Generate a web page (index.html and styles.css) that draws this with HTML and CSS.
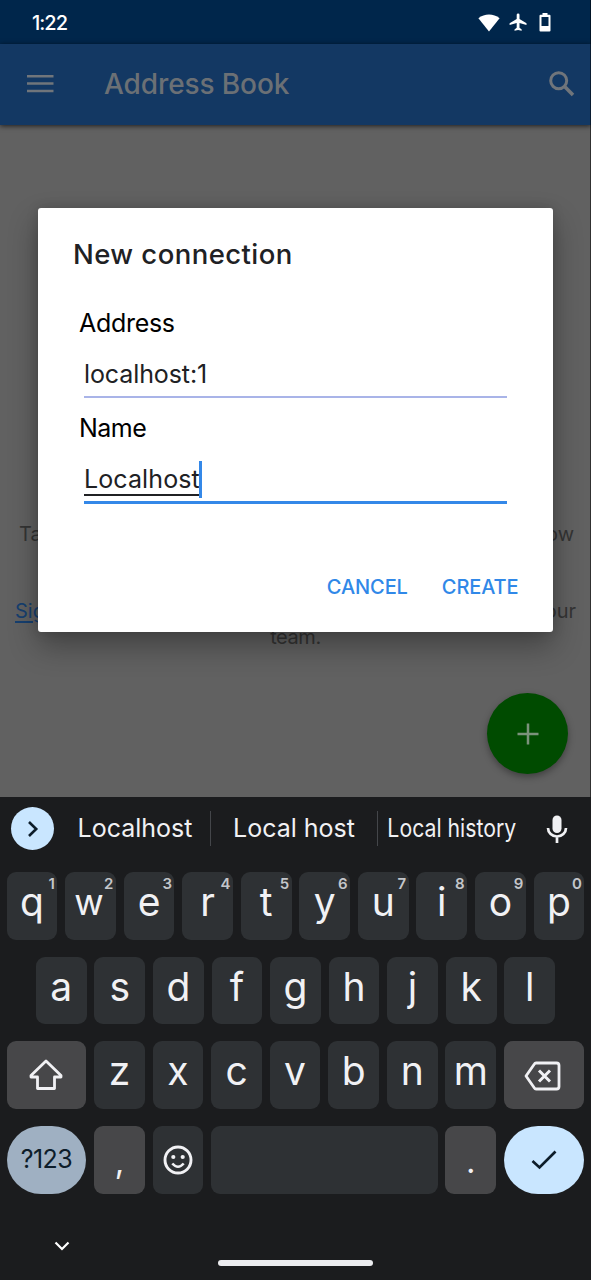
FILE: index.html
```html
<!DOCTYPE html>
<html lang="en">
<head>
<meta charset="utf-8">
<title>Address Book</title>
<link rel="stylesheet" href="styles.css">
</head>
<body>
<div class="phone">
  <main class="app">
    <div class="status">
      <span class="clock">1:22</span>
      <div class="status-icons">
        <svg width="22" height="18" viewBox="0 0 22 18"><path d="M11 17.500 .4 4.200C6.500-.6 15.500-.6 21.600 4.200Z" fill="#fff"/></svg>
        <svg width="18" height="19" viewBox="0 0 18 19"><path d="M17.500 12v-1.700L10.500 6V1.800a1.400 1.400 0 0 0-2.800 0V6L.6 10.300V12l7.100-2v4.800L5.500 16.400v1.400l3.600-.9 3.600.9v-1.400l-2.200-1.600V10Z" fill="#fff"/></svg>
        <svg width="12" height="19" viewBox="0 0 12 19"><path d="M3.500 0h5v1.800H10.500q1 0 1 1V17.500q0 1-1 1h-9q-1 0-1-1V2.800q0-1 1-1h2ZM2.500 4v9h7V4Z" fill="#fff" fill-rule="evenodd"/></svg>
      </div>
    </div>
    <header class="toolbar">
      <svg class="menu" width="27" height="20" viewBox="0 0 27 20"><path d="M0 2.200h26.500M0 9.600h26.500M0 17h26.500" stroke="#70757b" stroke-width="2.500"/></svg>
      <h1 class="toolbar-title">Address Book</h1>
      <svg width="26" height="26" viewBox="0 0 26 26"><circle cx="9.700" cy="9.700" r="8" fill="none" stroke="#70757b" stroke-width="3"/><path d="M15.600 15.600 24 24" stroke="#70757b" stroke-width="3.600"/></svg>
    </header>
    <section class="content">
      <p class="hint hint-first"><span>Ta</span><span>ow</span></p>
      <p class="hint hint-second"><a class="link">Sig</a><span>our</span></p>
      <p class="hint-last">team.</p>
    </section>
    <div class="fab"><svg width="22" height="22" viewBox="0 0 22 22"><path d="M11 .5v21M.5 11h21" stroke="#7b927b" stroke-width="2.500"/></svg></div>
    <div class="screen-edge"></div>
    <section class="dialog">
      <h2 class="dialog-title">New connection</h2>
      <label class="label">Address</label>
      <div class="field"><span class="value address-value">localhost:1</span></div>
      <label class="label label-name">Name</label>
      <div class="field field-active"><span class="value composing">Localhost</span><span class="caret"></span></div>
      <div class="actions"><span class="action cancel">CANCEL</span><span class="action create">CREATE</span></div>
    </section>
  </main>
  <section class="keyboard">
    <div class="suggestions">
      <span class="expand"><svg width="12" height="18" viewBox="0 0 12 18"><path d="M2 2 9.200 9 2 16" fill="none" stroke="#0d1d2a" stroke-width="2.600"/></svg></span>
      <span class="suggestion s1">Localhost</span>
      <span class="suggestion s2">Local host</span>
      <span class="suggestion s3"><span class="condensed">Local history</span></span>
      <svg class="mic" width="22" height="28" viewBox="0 0 22 28"><rect x="6.500" y=".5" width="9" height="17.500" rx="4.500" fill="#f1f1f4"/><path d="M2 13a9 8.500 0 0 0 18 0M11 21v7" fill="none" stroke="#f1f1f4" stroke-width="2.700"/></svg>
    </div>
    <div class="keys">
      <div class="row">
        <div class="key">q<sup>1</sup></div><div class="key key-w">w<sup>2</sup></div><div class="key">e<sup>3</sup></div><div class="key">r<sup>4</sup></div><div class="key">t<sup>5</sup></div><div class="key">y<sup>6</sup></div><div class="key">u<sup>7</sup></div><div class="key">i<sup>8</sup></div><div class="key">o<sup>9</sup></div><div class="key">p<sup>0</sup></div>
      </div>
      <div class="row">
        <div class="key">a</div><div class="key">s</div><div class="key">d</div><div class="key">f</div><div class="key">g</div><div class="key">h</div><div class="key">j</div><div class="key">k</div><div class="key">l</div>
      </div>
      <div class="row">
        <div class="key wide icon"><svg width="34" height="32" viewBox="0 0 34 32"><path d="M17 2 2 16.500v1.500h6.500v11.500h17V18H32v-1.500Z" fill="none" stroke="#f1f1f4" stroke-width="2.800" stroke-linejoin="round"/></svg></div><div class="key">z</div><div class="key">x</div><div class="key">c</div><div class="key">v</div><div class="key">b</div><div class="key">n</div><div class="key">m</div><div class="key wide icon backspace"><svg width="37" height="30" viewBox="0 0 37 30"><path d="M12 2h20.500q2.500 0 2.500 2.500v21q0 2.500-2.500 2.500H12q-1 0-1.600-1L2 15l8.400-12q.6-1 1.600-1Z" fill="none" stroke="#f1f1f4" stroke-width="2.800" stroke-linejoin="round"/><path d="m15 9.500 11 11m0-11-11 11" stroke="#f1f1f4" stroke-width="3"/></svg></div>
      </div>
      <div class="row">
        <div class="key wide symbols">?123</div>
        <div class="key muted punctuation">,</div>
        <div class="key icon"><svg width="30" height="30" viewBox="0 0 30 30"><circle cx="15" cy="15" r="13" fill="none" stroke="#f1f1f4" stroke-width="2.900"/><circle cx="10.300" cy="12" r="2.100" fill="#f1f1f4"/><circle cx="19.700" cy="12" r="2.100" fill="#f1f1f4"/><path d="M9.300 18.500q5.700 6.500 11.400 0" fill="none" stroke="#f1f1f4" stroke-width="2.600"/></svg></div>
        <div class="key space"></div>
        <div class="key muted punctuation">.</div>
        <div class="key wide icon enter"><svg width="26" height="20" viewBox="0 0 26 20"><path d="m1.500 11 7 6.500L24.500 1.500" fill="none" stroke="#0d1d2a" stroke-width="2.700"/></svg></div>
      </div>
    </div>
    <div class="nav">
      <svg class="collapse" width="16" height="11" viewBox="0 0 16 11"><path d="m1.500 1.500 6.500 6.500 6.500-6.500" fill="none" stroke="#fff" stroke-width="2.200"/></svg>
      <span class="home"></span>
    </div>
  </section>
</div>
</body>
</html>
```
FILE: styles.css
```css
* { box-sizing: border-box; }
body { margin: 0; background: #1b1c1e; font-family: Inter, Roboto, sans-serif; }
svg { display: block; flex: none; }
h1, h2, p { margin: 0; font-weight: 400; }

.phone { width: 591px; height: 1280px; overflow: hidden; display: flex; flex-direction: column; }
.app { position: relative; height: 797px; flex: none; background: #616161; overflow: hidden; }

.status { height: 44px; background: #00264b; display: flex; justify-content: space-between; align-items: center; padding: 1px 40px 0 32px; }
.clock { color: #fff; font-size: 20px; font-weight: 500; letter-spacing: -1px; }
.status-icons { display: flex; align-items: center; gap: 9px; }
.status-icons svg:last-child { margin-left: 3px; }

.toolbar { position: relative; height: 81px; background: #133863; display: flex; align-items: center; padding: 0 16px 2px 27px; box-shadow: 0 1px 5px rgba(0, 0, 0, .7); }
.toolbar-title { flex: 1; margin-left: 50px; color: #6b7075; font-size: 28px; font-weight: 500; letter-spacing: -.1px; }

.content { padding-top: 394px; color: #343434; font-size: 20px; line-height: 30px; }
.hint { display: flex; justify-content: space-between; }
.hint-first { padding: 0 17px 0 19px; }
.hint-second { padding: 0 15px; margin-top: 48px; line-height: 28px; }
.link { color: #163f6f; text-decoration: underline; text-underline-offset: 3px; }
.hint-last { text-align: center; line-height: 25px; letter-spacing: -.4px; }

.fab { position: absolute; left: 487px; top: 693px; width: 81px; height: 81px; border-radius: 50%; background: #004b00; display: grid; place-items: center; box-shadow: 0 3px 7px rgba(0, 0, 0, .35); }
.screen-edge { position: absolute; right: 0; top: 0; width: 1px; height: 100%; background: rgba(0, 0, 0, .5); }

.dialog { position: absolute; left: 38px; top: 208px; width: 514.500px; height: 424px; border-radius: 3px; background: #fff; padding: 29px 35px 0; display: flex; flex-direction: column; box-shadow: 0 14px 30px rgba(0, 0, 0, .32), 0 0 12px rgba(0, 0, 0, .15); }
.dialog-title { color: #202124; font-size: 27.500px; line-height: 34px; font-weight: 500; letter-spacing: .43px; }
.label { margin: 37px 0 0 6px; color: #000; font-size: 25px; line-height: 30px; letter-spacing: -.3px; }
.field { margin: 19px 11px 0; height: 41px; display: flex; align-items: flex-start; border-bottom: 2px solid #a9b4e8; }
.label-name { margin-top: 15px; letter-spacing: -.5px; }
.value { color: #202124; font-size: 25px; line-height: 34px; }
.address-value { letter-spacing: -.1px; }
.field-active { margin-top: 18px; height: 43px; border-bottom: 3px solid #3488e8; }
.composing { line-height: 31px; height: 32px; margin-top: 3px; border-bottom: 2px solid #202124; letter-spacing: .1px; }
.caret { width: 3px; height: 37px; background: #3488e8; margin-left: -1px; }
.actions { display: flex; justify-content: flex-end; gap: 34px; margin: 70px -1px 0 0; color: #3088e8; font-size: 20px; font-weight: 500; line-height: 26px; letter-spacing: -.1px; }

.keyboard { flex: 1; background: #1b1c1e; display: flex; flex-direction: column; }
.suggestions { height: 75px; padding: 0 23px 12px 11px; display: flex; align-items: center; color: #f1f1f4; font-size: 25px; }
.expand { width: 43px; height: 43px; border-radius: 50%; background: #c9e6ff; display: grid; place-items: center; flex: none; }
.suggestion { height: 35px; line-height: 34px; white-space: nowrap; text-align: center; }
.s1 { width: 157px; border-right: 1px solid #44464a; padding-left: 6px; }
.s2 { width: 167px; border-right: 1px solid #44464a; }
.s3 { width: 147px; display: flex; justify-content: center; }
.condensed { display: inline-block; transform: scaleX(.85); }
.mic { margin-left: auto; }

.keys { display: grid; gap: 17px; }
.row { display: flex; padding-left: 6.600px; gap: 7.750px; height: 67.700px; }
.row:nth-child(2) { padding-left: 35.900px; }
.key { position: relative; width: 50.800px; height: 67.700px; border-radius: 9px; background: #2e3134; color: #f1f1f4; font-size: 39px; line-height: 60px; text-align: center; flex: none; }
.key sup { position: absolute; right: 2.500px; top: 3px; font-size: 15px; line-height: 17px; font-weight: 600; color: #c4c6ca; }
.key-w { font-size: 36px; padding-right: 3px; }
.wide { width: 79.700px; }
.icon { display: grid; place-items: center; }
.backspace { padding-top: 2px; }
.backspace svg { margin-right: 2px; }
.wide.icon, .muted { background: #474749; }
.wide.symbols, .wide.enter { border-radius: 34px; background: #9fb0c2; }
.wide.enter { background: #c9e6ff; }
.symbols { color: #0d1d2a; font-size: 25px; line-height: 66px; letter-spacing: -.6px; }
.space { width: 226.500px; }
.punctuation { font-size: 33px; line-height: 70px; }

.nav { position: relative; flex: 1; }
.collapse { position: absolute; left: 54px; top: 47px; }
.home { position: absolute; left: 218px; top: 66px; width: 155px; height: 6px; border-radius: 3px; background: #ececef; }
```
